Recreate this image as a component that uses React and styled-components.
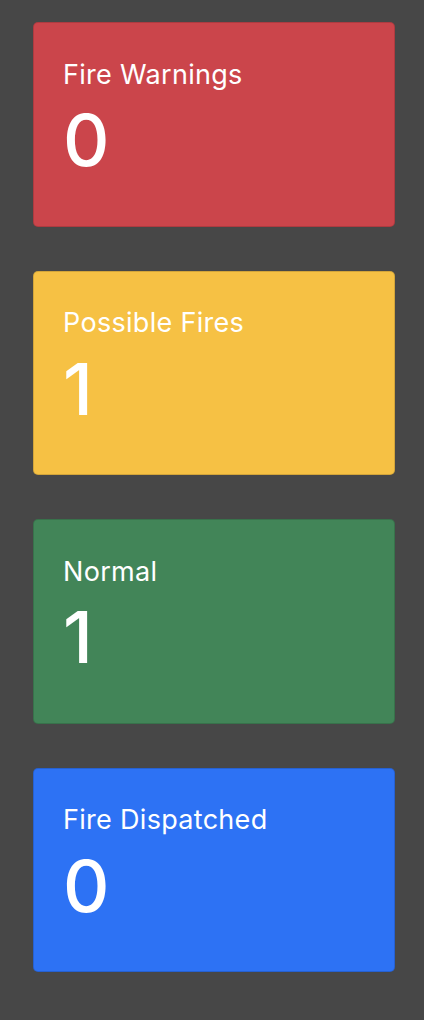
import React from "react";
import styled, { createGlobalStyle } from "styled-components";

const Global = createGlobalStyle`
  html, body { margin: 0; padding: 0; background: #474747; }
  body { font-family: Inter, "Noto Sans", sans-serif; }
`;

const Page = styled.main`
  display: flex;
  flex-direction: column;
  gap: 44px;
  padding: 22px 29px 40px 33px;
  min-height: 1020px;
  box-sizing: border-box;
`;

const Card = styled.section`
  box-sizing: border-box;
  height: 204.5px;
  border-radius: 5px;
  border: 1px solid rgba(0, 0, 0, 0.14);
  background: ${(p) => p.$bg};
  color: #fff;
  padding: 35.5px 30px 0 29px;
  display: flex;
  flex-direction: column;
`;

const Title = styled.h3`
  margin: 0;
  font-size: 27px;
  font-weight: 400;
  line-height: 32.7px;
  letter-spacing: 0.3px;
`;

const Count = styled.div`
  margin-top: 6px;
  font-size: 72px;
  font-weight: 500;
  line-height: 86px;
`;

const items = [
  { title: "Fire Warnings", count: 0, bg: "#cb454b" },
  { title: "Possible Fires", count: 1, bg: "#f6c144" },
  { title: "Normal", count: 1, bg: "#428558" },
  { title: "Fire Dispatched", count: 0, bg: "#2d72f4" },
];

export default function App() {
  return (
    <>
      <Global />
      <Page>
        {items.map((it) => (
          <Card key={it.title} $bg={it.bg}>
            <Title>{it.title}</Title>
            <Count>{it.count}</Count>
          </Card>
        ))}
      </Page>
    </>
  );
}
